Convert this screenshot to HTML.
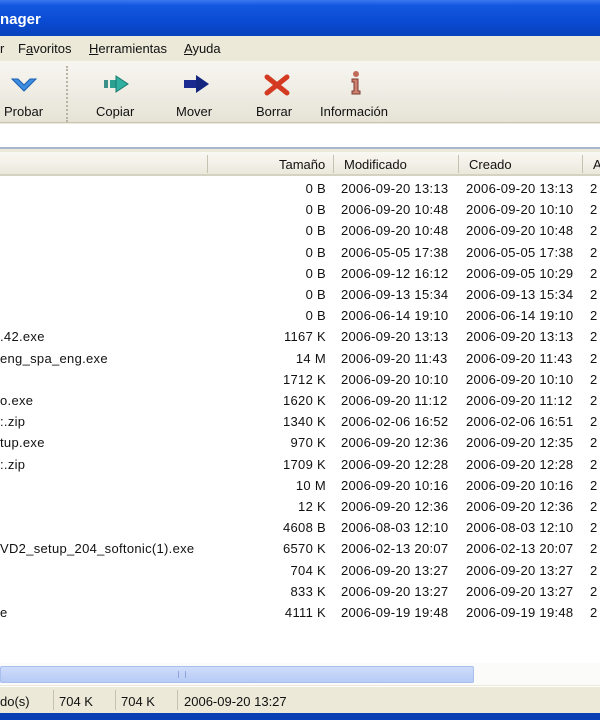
<!DOCTYPE html>
<html><head><meta charset="utf-8"><style>
*{margin:0;padding:0;box-sizing:border-box}
body{width:600px;height:720px;overflow:hidden;background:#ECE9D8;font-family:"Liberation Sans","DejaVu Sans",sans-serif;font-size:13px;color:#111;position:relative}
.a{position:absolute;white-space:nowrap}
#title{left:0;top:0;width:600px;height:36px;background:linear-gradient(#3a78f0 0%,#1458e0 15%,#0a4ad2 60%,#0843bc 100%)}
#title span{position:absolute;left:0;top:11px;color:#fff;font-weight:bold;font-size:15px}
#menu{left:0;top:36px;width:600px;height:25px;background:#ECE9D8}
#tb{left:0;top:61px;width:600px;height:62px;background:linear-gradient(#f7f6f1,#e6e3d6);border-bottom:1px solid #c9c5b5}
.lbl{top:104px}
#addr{left:0;top:124px;width:600px;height:25px;background:#fff;border-bottom:2px solid #a8b7cf}
#hdr{left:0;top:152px;width:600px;height:24px;background:linear-gradient(#f9f8f3,#ebe8dc);border-bottom:2px solid #d6d2c2}
.sep{position:absolute;top:3px;width:1px;height:18px;background:#c6c2b0}
#list{left:0;top:176px;width:600px;height:488px;background:#fff}
.r{position:absolute;left:0;width:600px;height:21px}
.r span{position:absolute;top:3px;letter-spacing:0.3px}
.sz{right:274px;text-align:right}
#sb{left:0;top:663px;width:600px;height:22px;background:#fbfbf9}
#status{left:0;top:686px;width:600px;height:27px;background:#ECE9D8;border-top:1px solid #fff}
#bot{left:0;top:713px;width:600px;height:7px;background:#0a3fb4}
</style></head><body>
<div id="title" class="a"><span>nager</span></div>
<div id="menu" class="a">
<span class="a" style="left:0;top:5px">r</span>
<span class="a" style="left:18px;top:5px">F<u>a</u>voritos</span>
<span class="a" style="left:89px;top:5px"><u>H</u>erramientas</span>
<span class="a" style="left:184px;top:5px"><u>A</u>yuda</span>
</div>
<div id="tb" class="a">
<div class="a" style="left:66px;top:5px;width:2px;height:56px;border-left:2px dotted #b8b4a4"></div>
</div>
<svg class="a" style="left:10px;top:75px" width="30" height="20"><path d="M2 4 L14 16 L26 4 L20 4 L14 10 L8 4Z" fill="#3c8ce0" stroke="#1d5fb0"/></svg>
<span class="a lbl" style="left:4px">Probar</span>
<svg class="a" style="left:102px;top:73px" width="30" height="22"><rect x="2" y="7" width="4" height="8" fill="#3a8f88"/><rect x="8" y="7" width="6" height="8" fill="#2aa090"/><path d="M14 3 L26 11 L14 19Z" fill="#2fb0a0" stroke="#1b7a70"/></svg>
<span class="a lbl" style="left:96px">Copiar</span>
<svg class="a" style="left:182px;top:73px" width="30" height="22"><rect x="2" y="7" width="14" height="8" fill="#1a2a90"/><path d="M14 2 L27 11 L14 20Z" fill="#142580"/></svg>
<span class="a lbl" style="left:176px">Mover</span>
<svg class="a" style="left:264px;top:73px" width="26" height="24"><path d="M3 4 L23 20 M23 4 L3 20" stroke="#d43a22" stroke-width="5" stroke-linecap="round"/></svg>
<span class="a lbl" style="left:256px">Borrar</span>
<svg class="a" style="left:348px;top:70px" width="16" height="26"><circle cx="8" cy="4" r="3" fill="#c06a5a"/><path d="M4 9 H10 V21 H12 V24 H4 V21 H6 V12 H4Z" fill="#d08070" stroke="#7a3a30"/></svg>
<span class="a lbl" style="left:320px">Información</span>
<div id="addr" class="a"></div>
<div id="hdr" class="a">
<div class="sep" style="left:207px"></div><div class="sep" style="left:333px"></div><div class="sep" style="left:458px"></div><div class="sep" style="left:582px"></div>
<span class="a" style="left:279px;top:5px">Tamaño</span>
<span class="a" style="left:344px;top:5px">Modificado</span>
<span class="a" style="left:469px;top:5px">Creado</span>
<span class="a" style="left:593px;top:5px">A</span>
</div>
<div id="list" class="a">
<div class="r" style="top:2px"><span class="sz">0 B</span><span style="left:341px">2006-09-20 13:13</span><span style="left:466px">2006-09-20 13:13</span><span style="left:590px">2</span></div>
<div class="r" style="top:23px"><span class="sz">0 B</span><span style="left:341px">2006-09-20 10:48</span><span style="left:466px">2006-09-20 10:10</span><span style="left:590px">2</span></div>
<div class="r" style="top:44px"><span class="sz">0 B</span><span style="left:341px">2006-09-20 10:48</span><span style="left:466px">2006-09-20 10:48</span><span style="left:590px">2</span></div>
<div class="r" style="top:66px"><span class="sz">0 B</span><span style="left:341px">2006-05-05 17:38</span><span style="left:466px">2006-05-05 17:38</span><span style="left:590px">2</span></div>
<div class="r" style="top:87px"><span class="sz">0 B</span><span style="left:341px">2006-09-12 16:12</span><span style="left:466px">2006-09-05 10:29</span><span style="left:590px">2</span></div>
<div class="r" style="top:108px"><span class="sz">0 B</span><span style="left:341px">2006-09-13 15:34</span><span style="left:466px">2006-09-13 15:34</span><span style="left:590px">2</span></div>
<div class="r" style="top:129px"><span class="sz">0 B</span><span style="left:341px">2006-06-14 19:10</span><span style="left:466px">2006-06-14 19:10</span><span style="left:590px">2</span></div>
<div class="r" style="top:150px"><span style="left:0">.42.exe</span><span class="sz">1167 K</span><span style="left:341px">2006-09-20 13:13</span><span style="left:466px">2006-09-20 13:13</span><span style="left:590px">2</span></div>
<div class="r" style="top:172px"><span style="left:0">eng_spa_eng.exe</span><span class="sz">14 M</span><span style="left:341px">2006-09-20 11:43</span><span style="left:466px">2006-09-20 11:43</span><span style="left:590px">2</span></div>
<div class="r" style="top:193px"><span class="sz">1712 K</span><span style="left:341px">2006-09-20 10:10</span><span style="left:466px">2006-09-20 10:10</span><span style="left:590px">2</span></div>
<div class="r" style="top:214px"><span style="left:0">o.exe</span><span class="sz">1620 K</span><span style="left:341px">2006-09-20 11:12</span><span style="left:466px">2006-09-20 11:12</span><span style="left:590px">2</span></div>
<div class="r" style="top:235px"><span style="left:0">:.zip</span><span class="sz">1340 K</span><span style="left:341px">2006-02-06 16:52</span><span style="left:466px">2006-02-06 16:51</span><span style="left:590px">2</span></div>
<div class="r" style="top:256px"><span style="left:0">tup.exe</span><span class="sz">970 K</span><span style="left:341px">2006-09-20 12:36</span><span style="left:466px">2006-09-20 12:35</span><span style="left:590px">2</span></div>
<div class="r" style="top:278px"><span style="left:0">:.zip</span><span class="sz">1709 K</span><span style="left:341px">2006-09-20 12:28</span><span style="left:466px">2006-09-20 12:28</span><span style="left:590px">2</span></div>
<div class="r" style="top:299px"><span class="sz">10 M</span><span style="left:341px">2006-09-20 10:16</span><span style="left:466px">2006-09-20 10:16</span><span style="left:590px">2</span></div>
<div class="r" style="top:320px"><span class="sz">12 K</span><span style="left:341px">2006-09-20 12:36</span><span style="left:466px">2006-09-20 12:36</span><span style="left:590px">2</span></div>
<div class="r" style="top:341px"><span class="sz">4608 B</span><span style="left:341px">2006-08-03 12:10</span><span style="left:466px">2006-08-03 12:10</span><span style="left:590px">2</span></div>
<div class="r" style="top:362px"><span style="left:0">VD2_setup_204_softonic(1).exe</span><span class="sz">6570 K</span><span style="left:341px">2006-02-13 20:07</span><span style="left:466px">2006-02-13 20:07</span><span style="left:590px">2</span></div>
<div class="r" style="top:384px"><span class="sz">704 K</span><span style="left:341px">2006-09-20 13:27</span><span style="left:466px">2006-09-20 13:27</span><span style="left:590px">2</span></div>
<div class="r" style="top:405px"><span class="sz">833 K</span><span style="left:341px">2006-09-20 13:27</span><span style="left:466px">2006-09-20 13:27</span><span style="left:590px">2</span></div>
<div class="r" style="top:426px"><span style="left:0">e</span><span class="sz">4111 K</span><span style="left:341px">2006-09-19 19:48</span><span style="left:466px">2006-09-19 19:48</span><span style="left:590px">2</span></div>
</div>
<div id="sb" class="a">
<div class="a" style="left:0;top:3px;width:474px;height:17px;background:linear-gradient(#cfdcfb,#b7cbf6);border:1px solid #a9bfee;border-radius:2px"></div>
<div class="a" style="left:178px;top:8px;width:8px;height:7px;border-left:1px solid #8ea6dc;border-right:1px solid #8ea6dc"></div>
</div>
<div id="status" class="a">
<span class="a" style="left:0;top:7px">do(s)</span>
<div class="a" style="left:53px;top:3px;width:1px;height:20px;background:#c6c2b0"></div>
<span class="a" style="left:59px;top:7px">704 K</span>
<div class="a" style="left:115px;top:3px;width:1px;height:20px;background:#c6c2b0"></div>
<span class="a" style="left:121px;top:7px">704 K</span>
<div class="a" style="left:177px;top:3px;width:1px;height:20px;background:#c6c2b0"></div>
<span class="a" style="left:184px;top:7px">2006-09-20 13:27</span>
</div>
<div id="bot" class="a"></div>
</body></html>
